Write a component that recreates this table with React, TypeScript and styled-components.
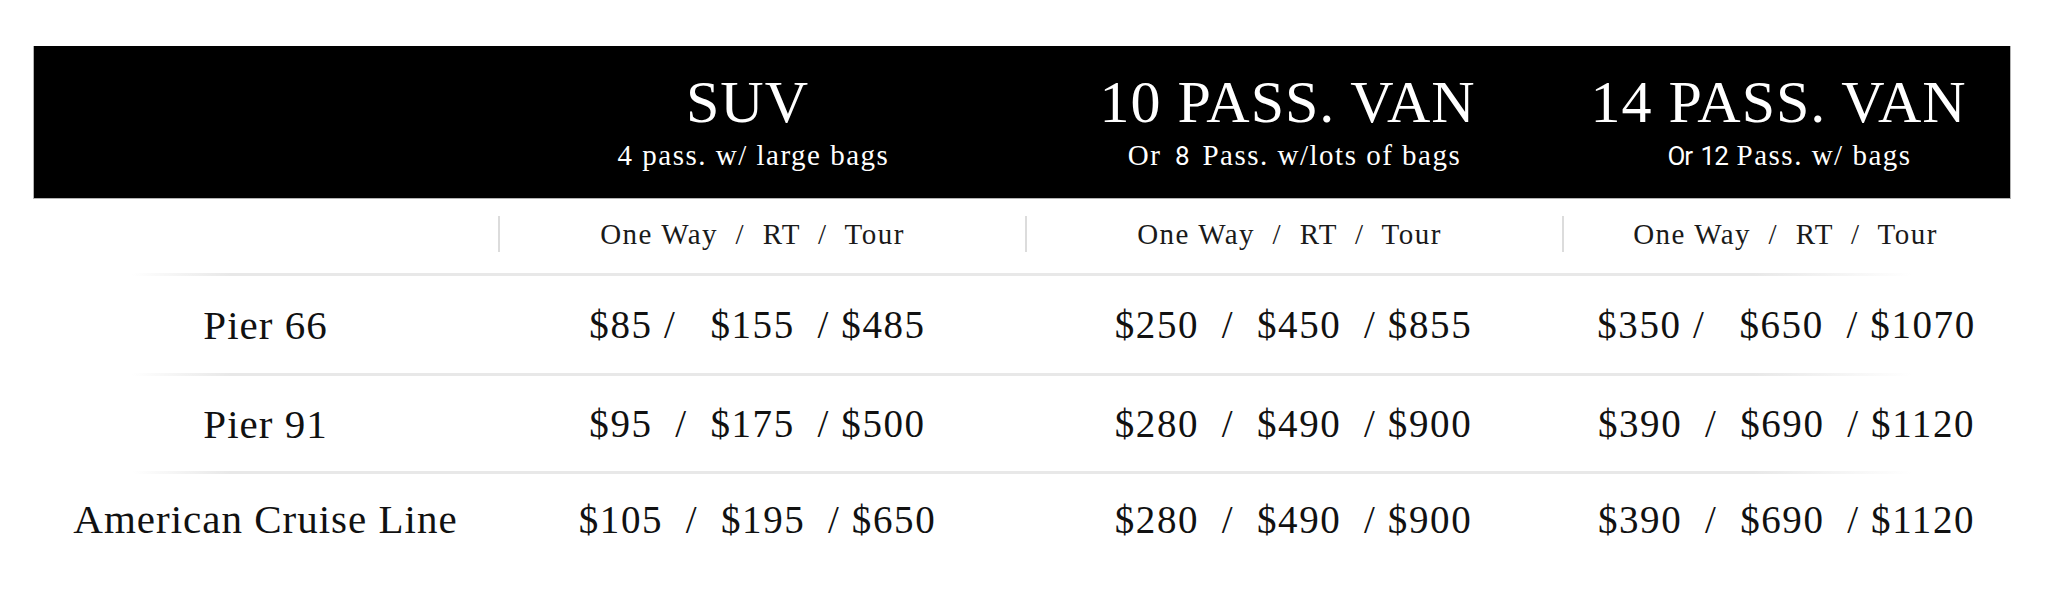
import { FC } from 'react'
import styled, { createGlobalStyle } from 'styled-components'

const GlobalStyle = createGlobalStyle`
  html, body {
    margin: 0;
    padding: 0;
    background: #fff;
  }
  body {
    font-family: 'Liberation Serif', 'Times New Roman', serif;
    color: #111;
  }
`

const columns = '465px 527px 537px 449px'

const Page = styled.div`
  width: 2048px;
  height: 598px;
  padding: 46px 0 0 33px;
  box-sizing: border-box;
`

const Table = styled.div`
  width: 1978px;
`

const HeadBar = styled.div`
  display: grid;
  grid-template-columns: ${columns};
  background: #000;
  border: 1px solid #b3b3b3;
  border-top: none;
  box-sizing: border-box;
  height: 153px;
  padding: 26px 0 0;
`

const HeadCell = styled.div`
  display: flex;
  flex-direction: column;
  align-items: center;
  color: #fff;
  padding-right: ${(p) => p.$shift || 0}px;
`

const Title = styled.div`
  font-size: 60px;
  line-height: 60px;
  letter-spacing: 1px;
  white-space: nowrap;
`

const Subtitle = styled.div`
  margin-top: 8px;
  margin-left: ${(p) => p.$nudge || 0}px;
  font-size: 29px;
  line-height: 30px;
  letter-spacing: 1.5px;
  white-space: pre;
`

const Narrow = styled.span`
  font-family: Roboto, 'Liberation Sans', sans-serif;
  font-size: 26px;
  letter-spacing: -1px;
  word-spacing: 3px;
  margin: 0 ${(p) => p.$gap || 0}px;
`

const SubRow = styled.div`
  display: grid;
  grid-template-columns: ${columns};
  padding: 17px 0 21px;
`

const WayCell = styled.div`
  height: 36px;
  line-height: 36px;
  text-align: center;
  font-size: 29px;
  letter-spacing: 1.5px;
  color: #1a1a1a;
  white-space: pre;
  border-left: ${(p) => (p.$rule ? '2px solid #dcdcdc' : 'none')};
  padding-right: ${(p) => p.$shift || 0}px;
`

const Divider = styled.div`
  height: 3px;
  background: linear-gradient(
    90deg,
    rgba(232, 232, 232, 0) 5%,
    #e8e8e8 10%,
    #e8e8e8 87%,
    rgba(232, 232, 232, 0) 95%
  );
`

const PriceRow = styled.div`
  display: grid;
  grid-template-columns: ${columns};
  align-items: center;
  height: ${(p) => p.$h}px;
`

const Label = styled.div`
  text-align: center;
  font-size: 41px;
  letter-spacing: 1px;
  color: #111;
`

const Price = styled.div`
  text-align: center;
  font-size: 39px;
  letter-spacing: 1.6px;
  white-space: pre;
  color: #111;
  padding-right: ${(p) => p.$shift || 0}px;
`

const rows = [
  {
    label: 'Pier 66',
    h: 97,
    prices: ['$85 /   $155  / $485', '$250  /  $450  / $855', '$350 /   $650  / $1070']
  },
  {
    label: 'Pier 91',
    h: 95,
    prices: ['$95  /  $175  / $500', '$280  /  $490  / $900', '$390  /  $690  / $1120']
  },
  {
    label: 'American Cruise Line',
    h: 90,
    prices: ['$105  /  $195  / $650', '$280  /  $490  / $900', '$390  /  $690  / $1120']
  }
]

const App: FC = () => (
  <>
    <GlobalStyle />
    <Page>
      <Table>
        <HeadBar>
          <HeadCell />
          <HeadCell $shift={30}>
            <Title>SUV</Title>
            <Subtitle $nudge={12}>4 pass. w/ large bags</Subtitle>
          </HeadCell>
          <HeadCell $shift={14}>
            <Title>10 PASS. VAN</Title>
            <Subtitle $nudge={14}>
              {'Or '}
              <Narrow $gap={5}>8</Narrow>
              {' Pass. w/lots of bags'}
            </Subtitle>
          </HeadCell>
          <HeadCell $shift={18}>
            <Title>14 PASS. VAN</Title>
            <Subtitle $nudge={22}>
              <Narrow>Or 12</Narrow>
              {' Pass. w/ bags'}
            </Subtitle>
          </HeadCell>
        </HeadBar>
        <SubRow>
          <WayCell />
          <WayCell $rule $shift={20}>One Way  /  RT  /  Tour</WayCell>
          <WayCell $rule $shift={10}>One Way  /  RT  /  Tour</WayCell>
          <WayCell $rule $shift={4}>One Way  /  RT  /  Tour</WayCell>
        </SubRow>
        {rows.map((row) => (
          <div key={row.label}>
            <Divider />
            <PriceRow $h={row.h}>
              <Label>{row.label}</Label>
              {row.prices.map((p, i) => (
                <Price key={i} $shift={i === 0 ? 8 : 0}>
                  {p}
                </Price>
              ))}
            </PriceRow>
          </div>
        ))}
      </Table>
    </Page>
  </>
)

export default App
